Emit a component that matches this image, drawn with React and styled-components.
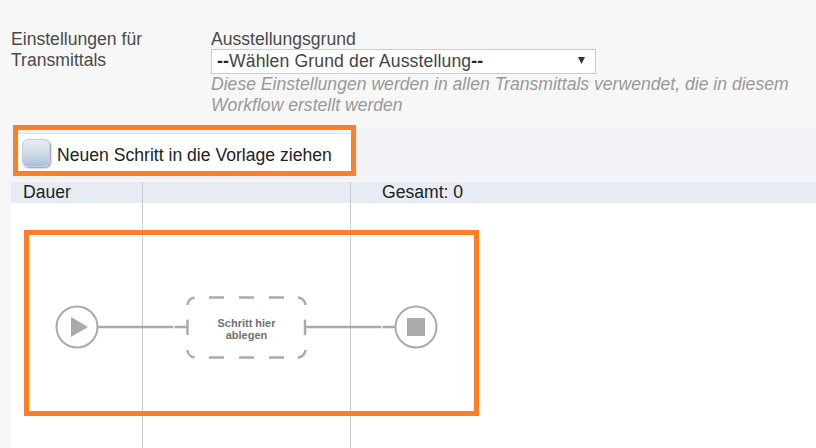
import styled, { createGlobalStyle } from 'styled-components';

const GlobalStyle = createGlobalStyle`
  html, body {
    margin: 0;
    padding: 0;
    background: #f7f7f7;
  }
  body {
    font-family: "Liberation Sans", Arial, sans-serif;
    font-size: 17.6px;
    overflow: hidden;
  }
`;

const App = () => {
  return (
    <Page>
      <GlobalStyle />
      <Settings>
        <SettingsLabel>
          Einstellungen für
          <br />
          Transmittals
        </SettingsLabel>
        <SettingsField>
          <FieldLabel>Ausstellungsgrund</FieldLabel>
          <FakeSelect>
            <SelectText>
              <Dashes>--</Dashes>Wählen Grund der Ausstellung<Dashes>--</Dashes>
            </SelectText>
            <SelectArrow viewBox='0 0 8 8'>
              <path d='M0 0h8L4 8z' fill='#333' />
            </SelectArrow>
          </FakeSelect>
          <Hint>
            Diese Einstellungen werden in allen Transmittals verwendet, die in
            diesem Workflow erstellt werden
          </Hint>
        </SettingsField>
      </Settings>

      <Toolbar>
        <DragItem>
          <StepTile />
          <DragLabel>Neuen Schritt in die Vorlage ziehen</DragLabel>
        </DragItem>
      </Toolbar>

      <Timeline>
        <HeaderRow>
          <HeaderCell>Dauer</HeaderCell>
          <HeaderCell />
          <HeaderCell $total>Gesamt: 0</HeaderCell>
        </HeaderRow>
        <Columns>
          <Column />
          <Column />
          <Column />
        </Columns>
        <FlowDiagram />
      </Timeline>

      <Highlight $left={13} $top={125} $width={343} $height={51} />
      <Highlight $left={24} $top={230} $width={455} $height={186} />
    </Page>
  );
};

const FlowDiagram = () => (
  <Diagram viewBox='0 0 816 448'>
    <g fill='none' stroke='#aaaaaa' strokeWidth='2'>
      <circle cx='77' cy='327' r='20.5' />
      <circle cx='416' cy='327' r='20.5' />
      <path d='M98 327H173M174.500 327H187M187.500 319.500V335' strokeWidth='2.400' />
      <path d='M305 327H381M382.500 327H395M305 319.500V335' strokeWidth='2.400' />
      <path
        d='M187.500 305a8 8 0 0 1 7-7.500M187.500 350a8 8 0 0 0 7 7.500M298 297.500a8 8 0 0 1 7.500 7.500M298 357.500a8 8 0 0 0 7.500-7.500'
        strokeWidth='2.500'
      />
      <path
        d='M209 297.500h15M239 297.500h15M269 297.500h15M209 357.500h15M239 357.500h15M269 357.500h15'
        strokeWidth='2.500'
      />
    </g>
    <path d='M71 317L88 327L71 337z' fill='#aaaaaa' />
    <rect x='407' y='318' width='18' height='18' fill='#aaaaaa' />
    <DropText x='246.500' y='326.500'>
      Schritt hier
    </DropText>
    <DropText x='246.500' y='339'>
      ablegen
    </DropText>
  </Diagram>
);

export default App;

const Page = styled.div`
  position: relative;
  width: 816px;
  height: 448px;
  overflow: hidden;
  background: #f7f7f7;
  display: flex;
  flex-direction: column;
`;

const Settings = styled.div`
  height: 128px;
  padding: 28px 0 0 11px;
  box-sizing: border-box;
  display: flex;
  flex-shrink: 0;
`;

const SettingsLabel = styled.div`
  width: 200px;
  padding-top: 1px;
  line-height: 21px;
  color: #4a4a4a;
`;

const SettingsField = styled.div`
  width: 600px;
`;

const FieldLabel = styled.div`
  padding-top: 1px;
  line-height: 20px;
  color: #4a4a4a;
`;

const FakeSelect = styled.div`
  width: 385px;
  height: 25px;
  box-sizing: border-box;
  border: 1px solid #cccccc;
  background: #ffffff;
  display: flex;
  align-items: center;
  justify-content: space-between;
  padding: 0 10px 0 5px;
  color: #444444;
`;

const SelectText = styled.span`
  letter-spacing: 0.13px;
`;

const Dashes = styled.span`
  font-weight: bold;
  color: #222222;
`;

const SelectArrow = styled.svg`
  width: 7px;
  height: 7px;
  margin-top: -2px;
`;

const Hint = styled.div`
  width: 590px;
  font-style: italic;
  line-height: 21px;
  color: #999999;
`;

const Toolbar = styled.div`
  height: 52px;
  flex-shrink: 0;
  margin-left: 11px;
  box-sizing: border-box;
  background: #f1f3f7;
  padding-top: 5px;
`;

const DragItem = styled.div`
  width: 335px;
  height: 39px;
  margin-left: 6px;
  box-sizing: border-box;
  background: #ffffff;
  border-top: 1px solid #dfe1e6;
  display: flex;
  align-items: center;
  gap: 7px;
  padding-left: 5px;
`;

const StepTile = styled.div`
  width: 28px;
  height: 28px;
  box-sizing: border-box;
  border-radius: 6px;
  background: linear-gradient(180deg, #e6edf5 0%, #d0dcea 50%, #a9bfd6 100%);
  border: 1px solid #c3cfdd;
  box-shadow: 1px 1px 2px rgba(70, 70, 70, 0.6);
`;

const DragLabel = styled.span`
  padding-top: 4px;
  color: #222222;
`;

const Timeline = styled.div`
  position: relative;
  flex: 1;
  margin: 2px 0 0 11px;
  background: #ffffff;
  display: flex;
  flex-direction: column;
`;

const HeaderRow = styled.div`
  display: grid;
  grid-template-columns: 132px 208px 1fr;
  height: 21px;
  background: #e7ecf4;
`;

const HeaderCell = styled.div`
  line-height: 21px;
  color: #222222;
  padding-left: ${(p) => (p.$total ? '31px' : '12px')};
  border-right: ${(p) => (p.$total ? 'none' : '1px solid #cccccc')};
`;

const Columns = styled.div`
  flex: 1;
  display: grid;
  grid-template-columns: 132px 208px 1fr;
`;

const Column = styled.div`
  border-right: 1px solid #cccccc;
  &:last-child {
    border-right: none;
  }
`;

const Diagram = styled.svg`
  position: absolute;
  left: -11px;
  top: -182px;
  width: 816px;
  height: 448px;
`;

const DropText = styled.text`
  font-family: "Liberation Sans", Arial, sans-serif;
  font-size: 11px;
  font-weight: bold;
  fill: #707070;
  text-anchor: middle;
`;

const Highlight = styled.div`
  position: absolute;
  box-sizing: border-box;
  left: ${(p) => p.$left}px;
  top: ${(p) => p.$top}px;
  width: ${(p) => p.$width}px;
  height: ${(p) => p.$height}px;
  border: 5px solid #ff7f27;
`;
